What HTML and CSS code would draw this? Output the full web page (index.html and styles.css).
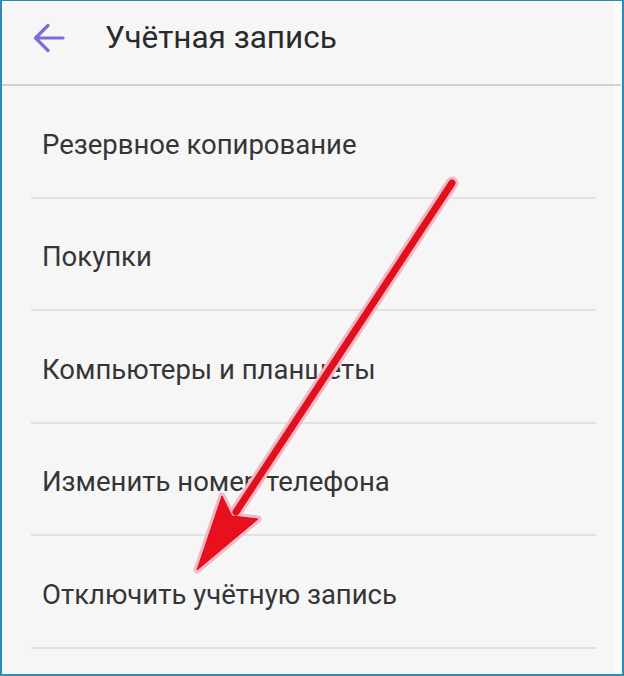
FILE: index.html
```html
<!DOCTYPE html>
<html lang="ru">
<head>
    <meta charset="UTF-8">
    <meta name="viewport" content="width=device-width, initial-scale=1.0">
    <title>Учётная запись</title>
    <link rel="stylesheet" href="styles.css">
</head>
<body>

    <div class="frame">
        <div class="screen">
            <div class="toolbar">
                <span class="back">
                    <svg width="32" height="32" viewBox="0 0 32 32">
                        <path d="M30 16 H3 M15 3.5 L2.5 16 L15 28.5" fill="none" stroke="#7d6bd8" stroke-width="3.2" stroke-linecap="round" stroke-linejoin="round"/>
                    </svg>
                </span>
                <h1 class="title">Учётная запись</h1>
            </div>

            <ul class="menu">
                <li class="menu-item">Резервное копирование</li>
                <li class="menu-item">Покупки</li>
                <li class="menu-item">Компьютеры и планшеты</li>
                <li class="menu-item">Изменить номер телефона</li>
                <li class="menu-item">Отключить учётную запись</li>
            </ul>
        </div>

        <!-- красная стрелка поверх списка -->
        <svg class="pointer" width="624" height="676" viewBox="0 0 624 676">
            <line x1="452" y1="183" x2="236" y2="512" stroke="#f3b8c6" stroke-width="13" stroke-linecap="round"/>
            <polygon points="197,570 222,496 232,516 258,519" fill="#f3b8c6" stroke="#f3b8c6" stroke-width="7" stroke-linejoin="round"/>
            <line x1="452" y1="183" x2="236" y2="512" stroke="#e0101c" stroke-width="7" stroke-linecap="round"/>
            <polygon points="197,570 222,496 232,516 258,519" fill="#e8101c" stroke="#d40f1a" stroke-width="1" stroke-linejoin="round"/>
        </svg>
    </div>

</body>
</html>
```

FILE: styles.css
```css
body {
    margin: 0;
    font-family: Roboto, "Liberation Sans", Arial, sans-serif;
    background-color: #ffffff;
}

.frame {
    position: relative;
    width: 624px;
    height: 676px;
    box-sizing: border-box;
    border: 2px solid #2a8db6;
    border-top-width: 1px;
    background-color: #fbfcfd;
    overflow: hidden;
}

.screen {
    margin-right: 7px;
    height: 100%;
    background-color: #f6f6f6;
}

.toolbar {
    display: flex;
    align-items: center;
    height: 73px;
    padding: 0 0 10px 31px;
    border-bottom: 2px solid #d0d0d0;
    margin-right: -6px;
}

.back {
    display: flex;
    width: 32px;
    height: 32px;
}

.title {
    margin: 0 0 0 40px;
    font-size: 31.5px;
    font-weight: 400;
    color: #2a2a2a;
}

.menu {
    list-style: none;
    margin: 0;
    padding: 0;
}

.menu-item {
    display: flex;
    align-items: center;
    height: 104.5px;
    margin: 0 19px 0 29px;
    padding: 6px 0 0 11px;
    border-bottom: 2px solid #e2e2e2;
    font-size: 27.5px;
    color: #353535;
}

.pointer {
    position: absolute;
    top: -1px;
    left: -2px;
    pointer-events: none;
}
```
